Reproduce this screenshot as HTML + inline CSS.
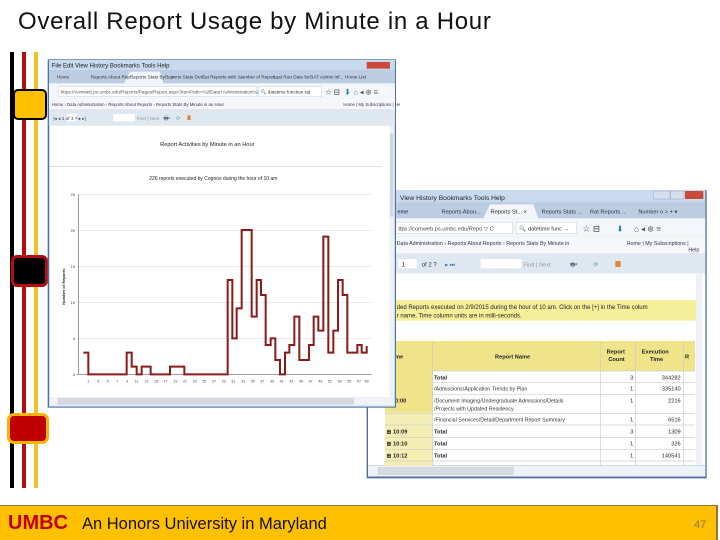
<!DOCTYPE html>
<html><head><meta charset="utf-8"><style>
body{margin:0;width:720px;height:540px;overflow:hidden;background:#fff;font-family:"Liberation Sans",sans-serif;position:relative}
.a{position:absolute}
</style></head><body>
<div class="a" style="left:18px;top:8px;font-size:24px;letter-spacing:0.7px;color:#111;white-space:nowrap">Overall Report Usage by Minute in a Hour</div>
<!-- vertical lines -->
<div class="a" style="left:10px;top:52px;width:4px;height:436px;background:#000"></div>
<div class="a" style="left:22px;top:52px;width:4px;height:436px;background:#b40f0f"></div>
<div class="a" style="left:34px;top:52px;width:4px;height:436px;background:#f2c02a"></div>
<div class="a" style="left:13px;top:89px;width:34px;height:31px;background:#ffc000;border:2px solid #000;border-radius:5px;box-sizing:border-box"></div>
<div class="a" style="left:11px;top:255px;width:37px;height:32px;background:#000;border:3px solid #b40f0f;border-radius:6px;box-sizing:border-box"></div>
<div class="a" style="left:7px;top:413px;width:42px;height:31px;background:#c00000;border:3px solid #f5b400;border-radius:7px;box-sizing:border-box"></div>

<!-- right window -->
<svg class="a" style="left:360px;top:185px" width="360" height="300" viewBox="0 0 1080 900" font-family="Liberation Sans" >
<rect x="20" y="15" width="1020" height="865" fill="#4a6fa0"/>
<rect x="24" y="15" width="1012" height="860" fill="#c9d9ee"/>
<text x="120" y="45" font-size="20" fill="#222">View  History  Bookmarks  Tools  Help</text>
<rect x="880" y="18" width="50" height="24" fill="#d5e0ee" stroke="#7890b0"/>
<rect x="932" y="18" width="40" height="24" fill="#d5e0ee" stroke="#7890b0"/>
<rect x="975" y="18" width="55" height="24" fill="#c84a3a"/>
<rect x="24" y="52" width="1012" height="48" fill="#bccde3"/>
<path d="M370 100 L390 58 L520 58 L535 100Z" fill="#f3f6fb"/>
<text x="112" y="85" font-size="17" fill="#222">eme</text>
<text x="245" y="85" font-size="17" fill="#333">Reports Abou...</text>
<text x="392" y="85" font-size="17" fill="#222">Reports St...  ×</text>
<text x="545" y="85" font-size="17" fill="#333">Reports Stats ...</text>
<text x="690" y="85" font-size="17" fill="#333">Rat Reports ...</text>
<text x="835" y="85" font-size="17" fill="#333">Number o  &gt;  +  ▾</text>
<rect x="24" y="100" width="1012" height="55" fill="#f3f6fb"/>
<rect x="108" y="112" width="350" height="34" fill="#fff" stroke="#a8b8cc"/>
<text x="115" y="136" font-size="17" fill="#444">ttps://comweb.ps.umbc.edu/Repo ▽ C</text>
<rect x="468" y="112" width="182" height="34" fill="#fff" stroke="#a8b8cc"/>
<text x="478" y="136" font-size="17" fill="#333">🔍 datetime func →</text>
<text x="668" y="140" font-size="26" fill="#333">☆ ⊟</text>
<text x="770" y="140" font-size="24" fill="#2a70c0">⬇</text>
<text x="822" y="140" font-size="24" fill="#555">⌂  ◂  ⊛  ≡</text>
<rect x="24" y="155" width="1012" height="50" fill="#f5f7fa"/>
<text x="110" y="180" font-size="16" fill="#335">Data Administration › Reports About Reports › Reports Stats By Minute in</text>
<text x="800" y="180" font-size="16" fill="#335">Home | My Subscriptions |</text>
<text x="985" y="200" font-size="16" fill="#335">Help</text>
<rect x="24" y="205" width="1012" height="60" fill="#dfe7f1"/>
<rect x="115" y="222" width="55" height="28" fill="#fff"/>
<text x="125" y="244" font-size="18" fill="#222">1</text>
<text x="185" y="244" font-size="18" fill="#334">of 2 ?</text>
<text x="255" y="244" font-size="18" fill="#2a70c0">▸  ⏭</text>
<rect x="362" y="222" width="122" height="28" fill="#fff"/>
<text x="490" y="244" font-size="17" fill="#999">Find | Next</text>
<text x="630" y="244" font-size="18" fill="#557">🖶▾</text>
<text x="700" y="244" font-size="18" fill="#5a9">⟳</text>
<rect x="766" y="228" width="16" height="18" fill="#e8823a"/>
<rect x="24" y="265" width="1012" height="575" fill="#fff"/>
<rect x="1008" y="265" width="20" height="575" fill="#eef1f5"/>
<rect x="24" y="345" width="984" height="62" fill="#f5ef9a"/>
<text x="110" y="372" font-size="18" fill="#222">ded Reports executed on 2/9/2015 during the hour of 10 am.  Click on the [+] in the Time colum</text>
<text x="110" y="398" font-size="18" fill="#222">r name. Time column units are in milli-seconds.</text>
<rect x="75" y="468" width="930" height="90" fill="#efe48a"/>
<rect x="75" y="558" width="143" height="125" fill="#efe48a"/>
<rect x="75" y="683" width="143" height="160" fill="#f4eeb5"/>
<g stroke="#ccc" stroke-width="2">
<line x1="218" y1="468" x2="218" y2="840"/><line x1="722" y1="468" x2="722" y2="840"/><line x1="826" y1="468" x2="826" y2="840"/><line x1="970" y1="468" x2="970" y2="840"/>
<line x1="218" y1="593" x2="1005" y2="593"/><line x1="218" y1="628" x2="1005" y2="628"/><line x1="75" y1="686" x2="1005" y2="686"/><line x1="75" y1="720" x2="1005" y2="720"/><line x1="75" y1="757" x2="1005" y2="757"/><line x1="75" y1="793" x2="1005" y2="793"/><line x1="75" y1="828" x2="1005" y2="828"/>
<line x1="218" y1="558" x2="1005" y2="558"/>
</g>
<g font-size="17" fill="#222" font-weight="bold">
<text x="105" y="520">me</text><text x="405" y="520">Report Name</text><text x="740" y="505">Report</text><text x="745" y="528">Count</text><text x="845" y="505">Execution</text><text x="870" y="528">Time</text><text x="975" y="520">R</text>
<text x="105" y="652">0:00</text>
<text x="222" y="583">Total</text><text x="80" y="745">⊞ 10:09</text><text x="222" y="745">Total</text>
<text x="80" y="781">⊞ 10:10</text><text x="222" y="781">Total</text>
<text x="80" y="817">⊞ 10:12</text><text x="222" y="817">Total</text>
</g>
<g font-size="16" fill="#333">
<text x="222" y="617">/Admissions/Application Trends by Plan</text>
<text x="222" y="652">/Document Imaging/Undergraduate Admissions/Details</text>
<text x="222" y="677">/Projects with Updated Residency</text>
<text x="222" y="710">/Financial Services/Detail/Department Report Summary</text>
</g>
<g font-size="17" fill="#222" text-anchor="end">
<text x="820" y="583">3</text><text x="962" y="583">344282</text>
<text x="820" y="617">1</text><text x="962" y="617">335140</text>
<text x="820" y="652">1</text><text x="962" y="652">2216</text>
<text x="820" y="710">1</text><text x="962" y="710">6516</text>
<text x="820" y="745">3</text><text x="962" y="745">1309</text>
<text x="820" y="781">1</text><text x="962" y="781">326</text>
<text x="820" y="817">1</text><text x="962" y="817">140541</text>
</g>
<rect x="24" y="843" width="1012" height="30" fill="#eef1f5"/>
<rect x="55" y="848" width="405" height="20" fill="#d6dbe2" stroke="#aab"/>
</svg>

<!-- left window -->
<svg class="a" style="left:0;top:40px" width="400" height="370" viewBox="0 0 1200 1110" font-family="Liberation Sans">
<rect x="143" y="58" width="1045" height="1045" fill="#50729c"/>
<rect x="147" y="60" width="1038" height="1040" fill="#c9d9ee"/>
<text x="155" y="82" font-size="18" fill="#222">File  Edit  View  History  Bookmarks  Tools  Help</text>
<rect x="1100" y="66" width="70" height="20" fill="#c84a3a"/>
<rect x="147" y="90" width="1038" height="40" fill="#bccde3"/>
<path d="M372 130 L390 95 L480 95 L490 130Z" fill="#f3f6fb"/>
<g font-size="14" fill="#333"><text x="170" y="115">Home</text><text x="272" y="115">Reports About Rep...</text><text x="390" y="115">Reports Stats By ... ×</text><text x="495" y="115">Reports Stats Dur...</text><text x="605" y="115">Rat Reports with ...</text><text x="715" y="115">Number of Report...</text><text x="820" y="115">Last Run Date for...</text><text x="930" y="115">RAT Admin Inf...</text><text x="1035" y="115">Home List</text></g>
<rect x="147" y="130" width="1038" height="50" fill="#f3f6fb"/>
<rect x="175" y="140" width="595" height="30" fill="#fff" stroke="#a8b8cc"/>
<text x="182" y="161" font-size="14" fill="#555">https://comweb.ps.umbc.edu/Reports/Pages/Report.aspx?ItemPath=%2fData+Administration%2fReports+About+Reports ▽ C</text>
<rect x="775" y="140" width="190" height="30" fill="#fff" stroke="#a8b8cc"/>
<text x="782" y="161" font-size="14" fill="#333">🔍 datetime function sql</text>
<text x="975" y="164" font-size="22" fill="#444">☆ ⊟</text><text x="1033" y="164" font-size="22" fill="#2a70c0">⬇</text><text x="1060" y="164" font-size="22" fill="#555">⌂ ◂ ⊛ ≡</text>
<rect x="147" y="180" width="1038" height="27" fill="#f5f7fa"/>
<text x="155" y="198" font-size="13" fill="#335">Home › Data Administration › Reports About Reports › Reports Stats By Minute in an Hour</text>
<text x="1030" y="198" font-size="13" fill="#335">Home | My Subscriptions | Help</text>
<rect x="147" y="207" width="1038" height="50" fill="#dfe7f1"/>
<rect x="200" y="222" width="30" height="22" fill="#fff"/>
<text x="160" y="240" font-size="14" fill="#334">|◂  ◂  1      of 3 ?  ▸  ▸|</text>
<rect x="340" y="222" width="65" height="22" fill="#fff"/>
<text x="410" y="240" font-size="14" fill="#999">Find | Next</text>
<text x="490" y="240" font-size="16" fill="#557">🖶▾</text><text x="528" y="240" font-size="16" fill="#5a9">⟳</text><rect x="562" y="226" width="10" height="14" fill="#e8823a"/>
<rect x="150" y="257" width="1020" height="815" fill="#fff"/>
<rect x="1168" y="257" width="14" height="815" fill="#eef1f5"/>
<rect x="1170" y="280" width="10" height="250" fill="#d0d6de"/>
<text x="622" y="318" font-size="17" fill="#222" text-anchor="middle">Report Activities by Minute in an Hour</text>
<line x1="150" y1="380" x2="1145" y2="380" stroke="#ccc" stroke-width="2"/>
<text x="640" y="420" font-size="15" fill="#222" text-anchor="middle">226 reports executed by Cognos during the hour of 10 am</text>
<g stroke="#ddd" stroke-width="2">
<line x1="230" y1="463" x2="1115" y2="463"/><line x1="230" y1="571" x2="1115" y2="571"/><line x1="230" y1="679" x2="1115" y2="679"/><line x1="230" y1="787" x2="1115" y2="787"/><line x1="230" y1="895" x2="1115" y2="895"/>
</g>
<line x1="235" y1="463" x2="235" y2="1003" stroke="#666" stroke-width="2"/>
<line x1="230" y1="1003" x2="1115" y2="1003" stroke="#666" stroke-width="2"/>
<g font-size="12" fill="#444" text-anchor="end"><text x="225" y="468">25</text><text x="225" y="576">20</text><text x="225" y="684">15</text><text x="225" y="792">10</text><text x="225" y="900">5</text><text x="225" y="1008">0</text></g>
<text x="195" y="740" font-size="12" fill="#222" transform="rotate(-90 195 740)" text-anchor="middle" font-weight="bold">Number of Reports</text>
<g font-size="11" fill="#444" text-anchor="middle">
<text x="265" y="1028">1</text><text x="294" y="1028">3</text><text x="323" y="1028">5</text><text x="352" y="1028">7</text><text x="381" y="1028">9</text><text x="410" y="1028">11</text><text x="439" y="1028">13</text><text x="468" y="1028">15</text><text x="497" y="1028">17</text><text x="526" y="1028">19</text><text x="555" y="1028">21</text><text x="584" y="1028">23</text><text x="613" y="1028">25</text><text x="642" y="1028">27</text><text x="671" y="1028">29</text><text x="700" y="1028">31</text><text x="729" y="1028">33</text><text x="758" y="1028">35</text><text x="787" y="1028">37</text><text x="816" y="1028">39</text><text x="845" y="1028">41</text><text x="874" y="1028">43</text><text x="903" y="1028">45</text><text x="932" y="1028">47</text><text x="961" y="1028">49</text><text x="990" y="1028">51</text><text x="1019" y="1028">53</text><text x="1048" y="1028">55</text><text x="1077" y="1028">57</text><text x="1100" y="1028">59</text>
</g>
<polyline fill="none" stroke="#8b1a1a" stroke-width="6" points="250,938 265,938 265,1003 380,1003 380,938 395,938 395,980 410,980 410,1003 425,1003 425,980 452,980 452,1003 510,1003 510,980 553,980 553,1003 683,1003 683,720 697,720 697,895 710,895 710,805 725,805 725,570 755,570 755,830 770,830 770,720 783,720 783,765 797,765 797,915 812,915 812,895 826,895 826,960 840,960 840,1003 855,1003 855,938 868,938 868,915 883,915 883,830 898,830 898,960 927,960 927,915 941,915 941,830 955,830 955,872 970,872 970,590 985,590 985,938 1000,938 1000,872 1014,872 1014,720 1028,720 1028,765 1042,765 1042,938 1072,938 1072,915 1085,915 1085,938 1100,938 1100,918"/>
<rect x="150" y="1072" width="1032" height="25" fill="#eef1f5"/>
<rect x="175" y="1076" width="885" height="16" fill="#d6dbe2" stroke="#aab"/>
</svg>

<!-- footer -->
<div class="a" style="left:0;top:505px;width:718px;height:35px;background:#ffc000;border-top:1px solid #8a7a30;border-right:2px solid #8a7a30;box-sizing:border-box"></div>
<div class="a" style="left:8px;top:512px;font-size:20px;font-weight:bold;color:#c00000">UMBC</div>
<div class="a" style="left:82px;top:515px;font-size:16.5px;color:#111;white-space:nowrap">An Honors University in Maryland</div>
<div class="a" style="left:694px;top:519px;font-size:11px;color:#8a7a50">47</div>
</body></html>
